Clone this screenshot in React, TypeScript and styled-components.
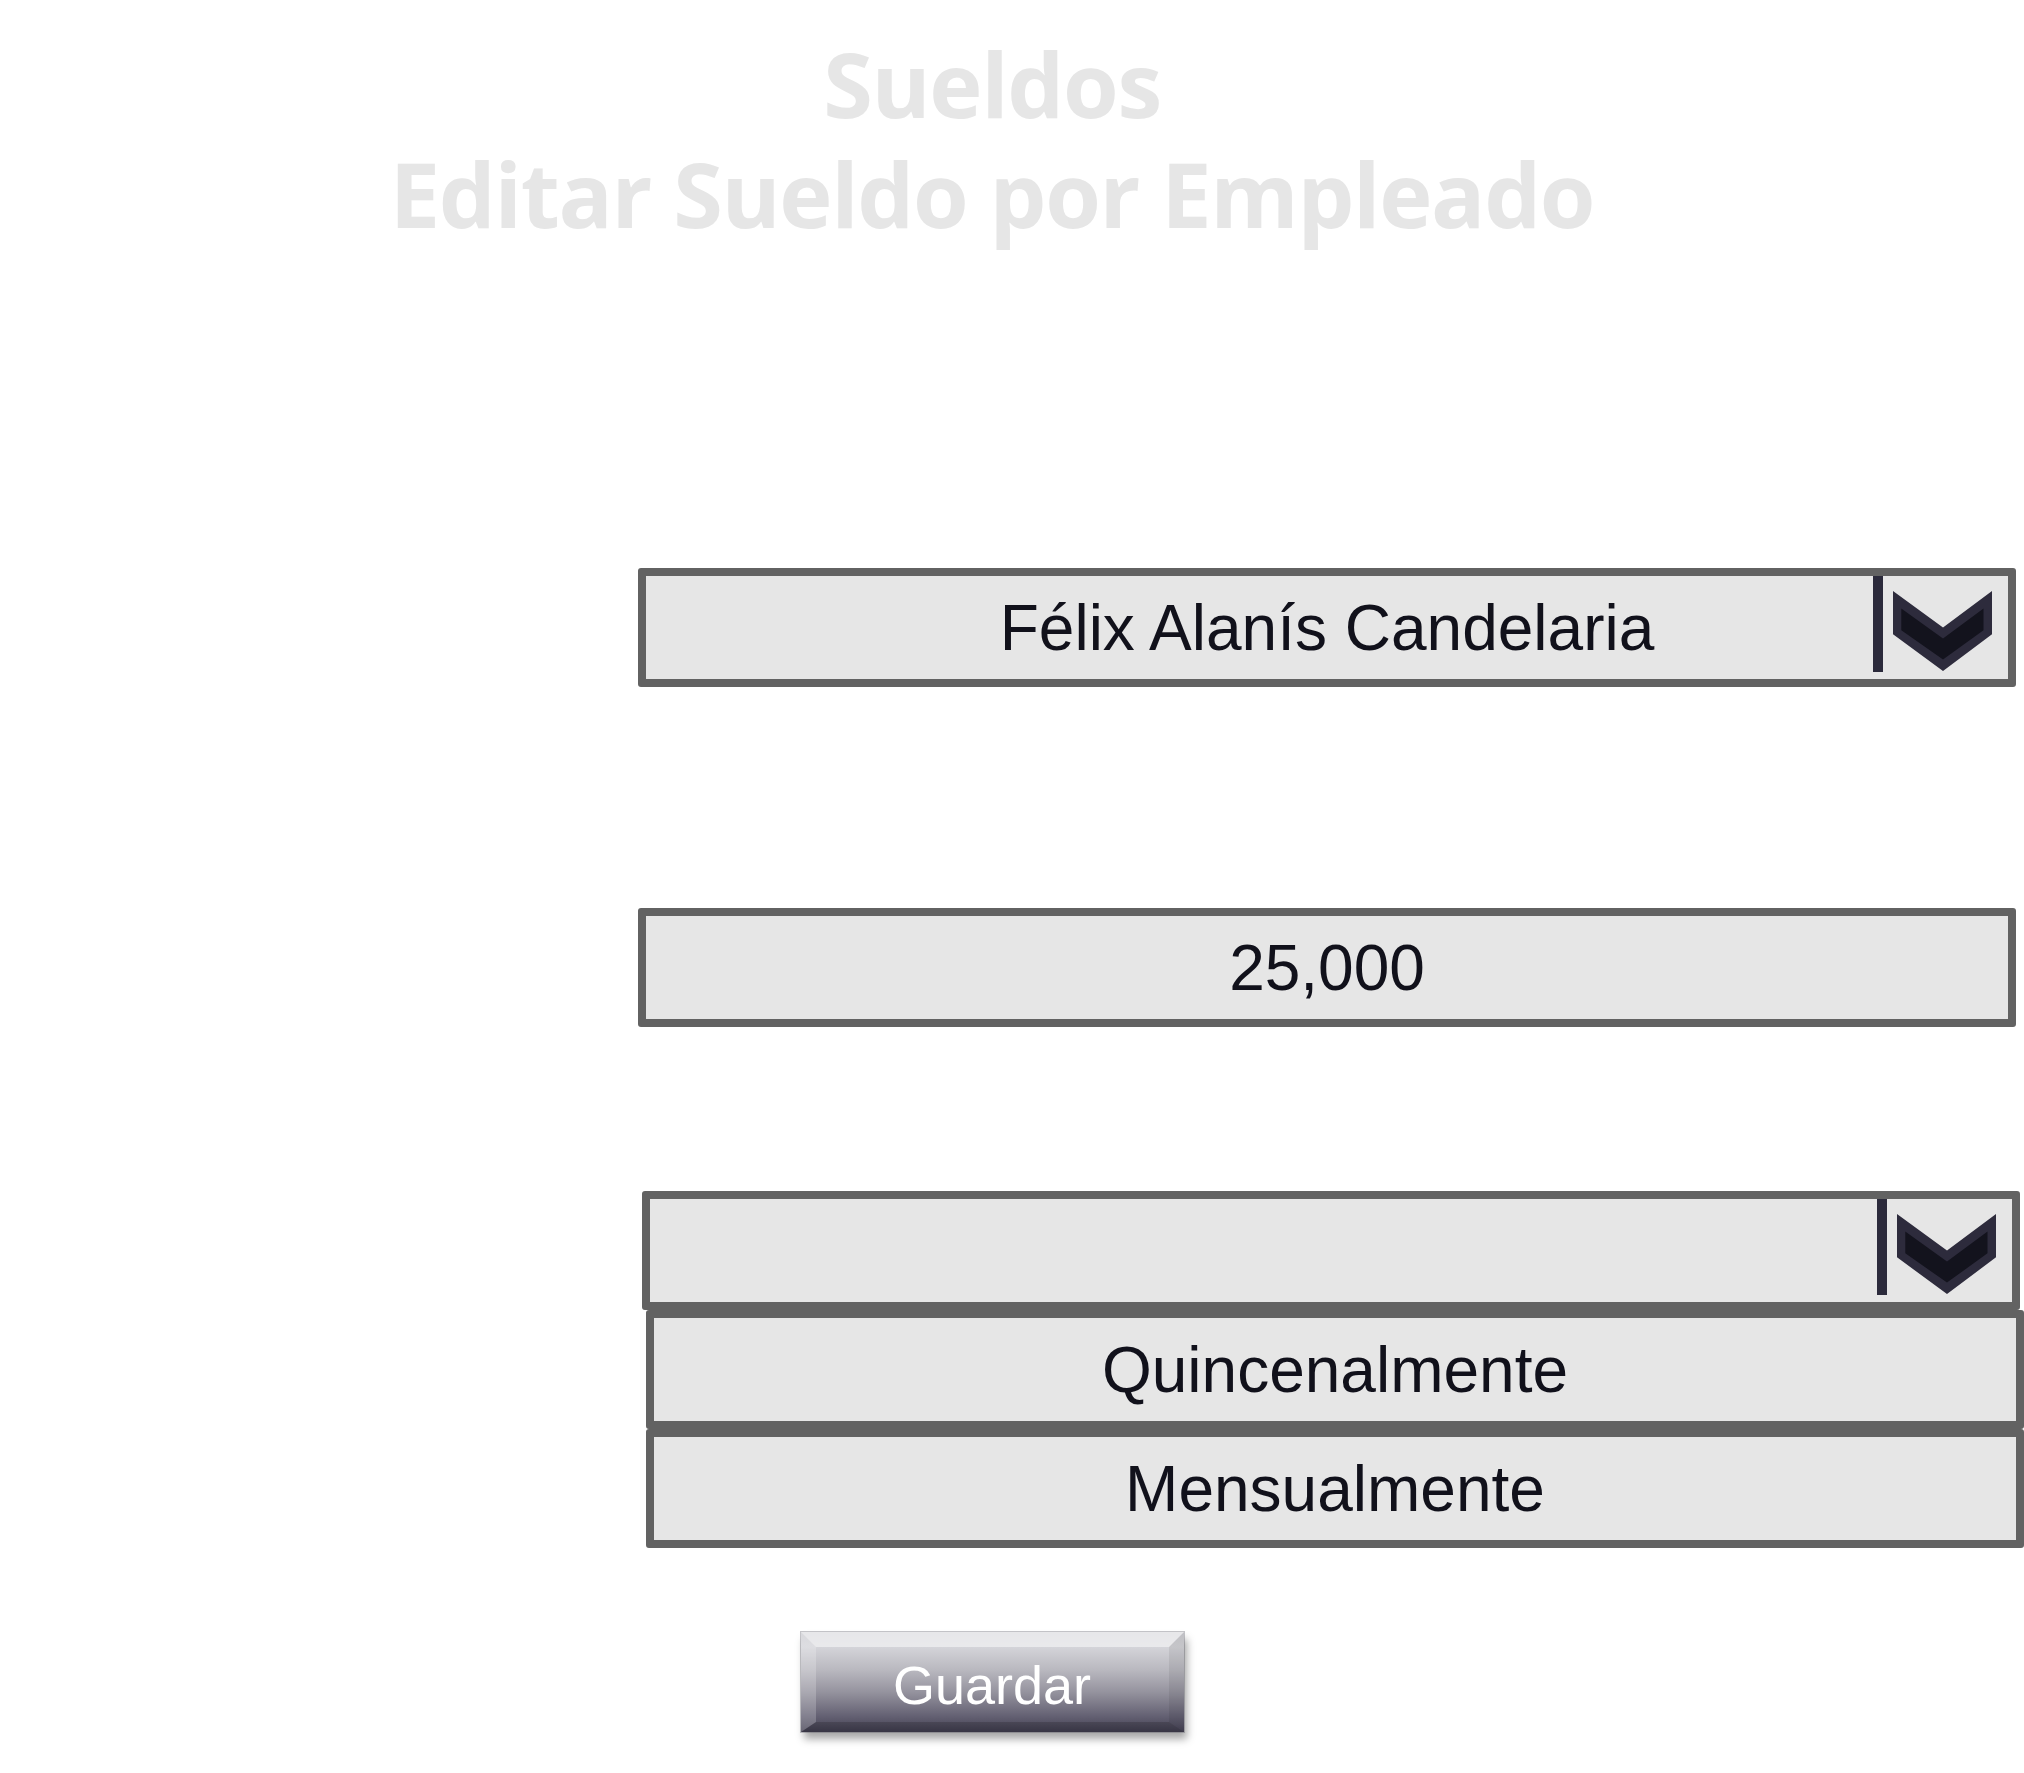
import React from "react";
import styled, { createGlobalStyle } from "styled-components";

const GlobalStyle = createGlobalStyle`
  html, body {
    margin: 0;
    padding: 0;
    background: #ffffff;
    overflow-x: hidden;
  }
  * { box-sizing: border-box; }
`;

const Page = styled.div`
  width: 2024px;
  min-height: 1773px;
  padding-top: 28px;
  display: flex;
  flex-direction: column;
`;

const Header = styled.header`
  width: 1984px;
  text-align: center;
  font-family: "Open Sans", "Noto Sans", sans-serif;
  font-weight: 700;
  font-size: 90px;
  line-height: 110px;
  color: #e6e6e6;
  letter-spacing: -1.3px;
`;

const Line = styled.div``;

const Form = styled.form`
  display: flex;
  flex-direction: column;
  margin-top: 320px;
`;

const Field = styled.div<{ $left: number; $top?: number }>`
  position: relative;
  margin-left: ${(p) => p.$left}px;
  margin-top: ${(p) => p.$top ?? 0}px;
  width: 1378px;
  height: 119px;
  border: 8px solid #626262;
  border-radius: 3px;
  background: #e6e6e6;
  display: flex;
  align-items: center;
  justify-content: center;
  font-family: "Liberation Sans", Arial, sans-serif;
  font-size: 64px;
  color: #11111b;
`;

const Toggle = styled.div`
  position: absolute;
  top: 0;
  right: 16px;
  display: flex;
  gap: 10px;
  align-items: flex-start;
`;

const Divider = styled.span`
  display: block;
  width: 10px;
  height: 96px;
  background: #2b2a3b;
`;

const ChevronSvg = styled.svg`
  margin-top: 15px;
  display: block;
`;

const ButtonRow = styled.div`
  width: 1984px;
  display: flex;
  justify-content: center;
  margin-top: 84px;
`;

const SaveButton = styled.button`
  width: 383px;
  height: 100px;
  border-style: solid;
  border-width: 15px 15px 10px 15px;
  border-color: rgba(255, 255, 255, 0.5) rgba(0, 0, 0, 0.07) rgba(0, 0, 0, 0.16)
    rgba(255, 255, 255, 0.2);
  border-radius: 0;
  background-image: linear-gradient(
    180deg,
    #cfcfd4 0%,
    #d4d4d9 15%,
    #b9b8bf 38%,
    #95939e 60%,
    #646173 84%,
    #434052 100%
  );
  background-origin: border-box;
  background-clip: border-box;
  background-repeat: no-repeat;
  box-shadow: 0 0 0 1px rgba(90, 88, 100, 0.35), 3px 7px 8px rgba(0, 0, 0, 0.35);
  font-family: "Liberation Sans", Arial, sans-serif;
  font-size: 54px;
  color: #ffffff;
  padding: 0;
  display: flex;
  align-items: center;
  justify-content: center;
  cursor: pointer;
`;

const Chevron = () => (
  <ChevronSvg width="99" height="80" viewBox="0 0 99 80">
    <polygon
      points="0,0 50,36.6 99,0 99,43.3 50,80 0,43.3"
      fill="#2d2b3c"
    />
    <polygon
      points="8.3,17.6 50,47.6 90.5,17.6 90.5,39.3 50,68.6 8.3,39.3"
      fill="#13131d"
    />
  </ChevronSvg>
);

const DropToggle = () => (
  <Toggle>
    <Divider />
    <Chevron />
  </Toggle>
);

export default function App() {
  return (
    <>
      <GlobalStyle />
      <Page>
        <Header>
          <Line>Sueldos</Line>
          <Line>Editar Sueldo por Empleado</Line>
        </Header>
        <Form onSubmit={(e) => e.preventDefault()}>
          <Field $left={638}>
            Félix Alanís Candelaria
            <DropToggle />
          </Field>
          <Field $left={638} $top={221}>
            25,000
          </Field>
          <Field $left={642} $top={164}>
            <DropToggle />
          </Field>
          <Field $left={646}>Quincenalmente</Field>
          <Field $left={646}>Mensualmente</Field>
        </Form>
        <ButtonRow>
          <SaveButton type="button">Guardar</SaveButton>
        </ButtonRow>
      </Page>
    </>
  );
}
